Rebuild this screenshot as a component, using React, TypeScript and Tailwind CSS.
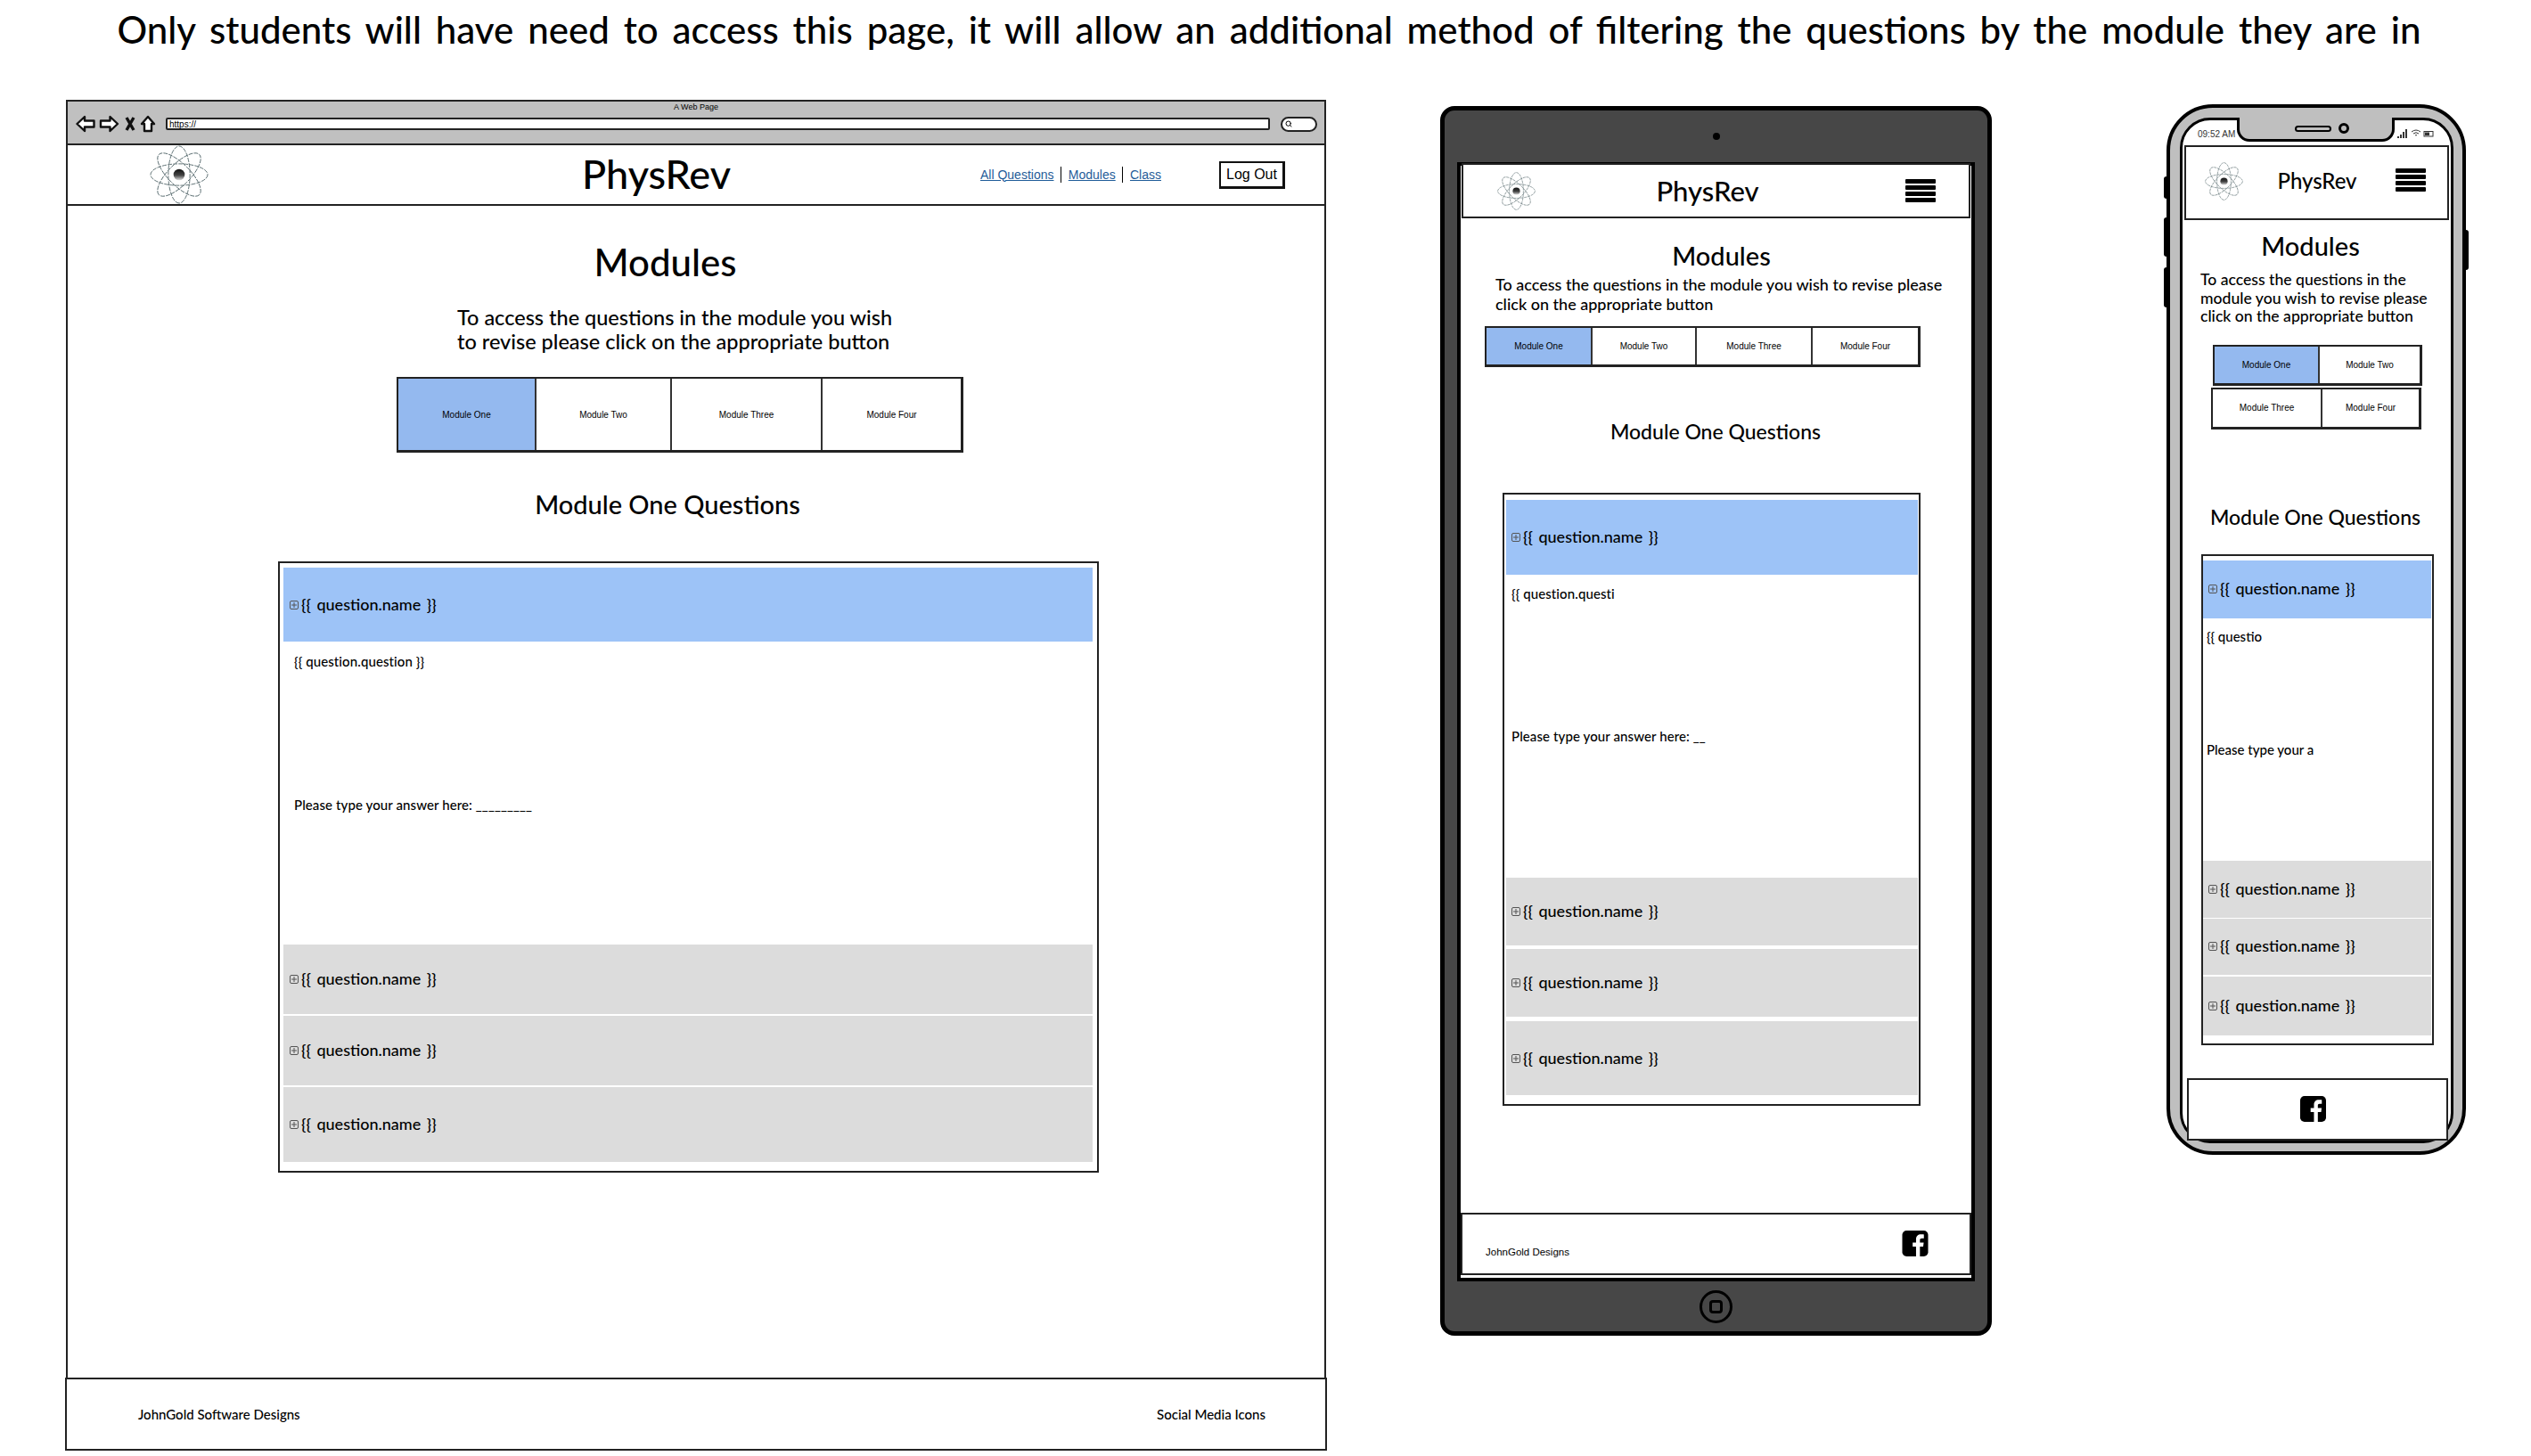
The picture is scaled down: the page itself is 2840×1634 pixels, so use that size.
import React from 'react';
import { Search } from 'lucide-react';
import clsx from 'clsx';

const arial = "font-['Liberation_Sans',sans-serif] font-normal";

function AtomLogo({ className }: { className: string }) {
    return (
        <svg viewBox="0 0 68 68" className={className} fill="none">
            <defs>
                <linearGradient id="core" x1="0" y1="0" x2="0" y2="1">
                    <stop offset="0" stopColor="#111" />
                    <stop offset="0.55" stopColor="#444" />
                    <stop offset="1" stopColor="#ddd" />
                </linearGradient>
            </defs>
            {[0, 45, 90, 135].map((r) => (
                <ellipse
                    key={r}
                    cx="34"
                    cy="34"
                    rx="33"
                    ry="12.5"
                    stroke="#4b5f63"
                    strokeWidth="0.9"
                    strokeDasharray="5 1.2"
                    transform={`rotate(${r} 34 34)`}
                />
            ))}
            <circle cx="34" cy="34" r="6.5" fill="url(#core)" />
        </svg>
    );
}

function FacebookIcon({ className }: { className: string }) {
    return (
        <svg viewBox="0 0 30 30" className={className}>
            <rect width="30" height="30" rx="5" fill="#000" />
            <path
                d="M20.5 30V18.5h3.8l.6-4.5h-4.4v-2.8c0-1.3.4-2.2 2.2-2.2h2.4V4.6c-.4-.1-1.8-.2-3.4-.2-3.4 0-5.7 2-5.7 5.8V14h-3.9v4.5h3.9V30z"
                fill="#fff"
            />
        </svg>
    );
}

function Hamburger() {
    return (
        <div className="flex h-[27px] w-[34px] flex-col justify-between">
            <span className="h-[5px] rounded-[1px] bg-black" />
            <span className="h-[5px] rounded-[1px] bg-black" />
            <span className="h-[5px] rounded-[1px] bg-black" />
            <span className="h-[5px] rounded-[1px] bg-black" />
        </div>
    );
}

function QuestionRow({ className }: { className: string }) {
    return (
        <div className={clsx('flex items-center text-[18px] leading-none whitespace-nowrap [word-spacing:2px]', className)}>
            <svg viewBox="0 0 10 10" className="mr-[3px] h-[10px] w-[10px] shrink-0" fill="none" stroke="#555" strokeWidth="1">
                <rect x="0.5" y="0.5" width="9" height="9" rx="1.5" />
                <path d="M2 5h6M5 2v6" />
            </svg>
            <span className="-mt-[2px]">{'{{ question.name }}'}</span>
        </div>
    );
}

function Tabs({ labels, className }: { labels: string[]; className: string }) {
    return (
        <div className={clsx('grid border-2 border-r-[3px] border-b-[3px] border-[#222]', arial, className)}>
            {labels.map((label, i) => (
                <div
                    key={label}
                    className={clsx(
                        'flex items-center justify-center text-[10px]',
                        i < labels.length - 1 && 'border-r-2 border-[#333]',
                        label === 'Module One' ? 'bg-[#94b9ef]' : 'bg-white',
                    )}
                >
                    {label}
                </div>
            ))}
        </div>
    );
}

function DesktopMock() {
    return (
        <div className="mt-[44px] ml-[73px] flex h-[1516px] w-[1416px] flex-col">
            {/* Browser bar */}
            <div className="mx-px h-[51px] border-2 border-[#222] bg-[#c0c0c0]">
                <div className={clsx('flex h-[13px] items-center justify-center text-[9px]', arial)}>A Web Page</div>
                <div className="flex h-[24px] items-center pl-[9px]">
                    <svg viewBox="0 0 90 20" className="h-[20px] w-[90px]" fill="#fff" stroke="#111" strokeWidth="2.4" strokeLinejoin="round">
                        <path d="M1.5 10 10 2v4.5h10.5v7H10V18z" />
                        <path d="M47 10 38.500 2v4.5H28v7h10.500V18z" />
                        <path d="M57 3l8 14M65 3l-8 14" fill="none" strokeWidth="3.4" />
                        <path d="M74 10l7-8 7 8h-3v8h-8v-8z" />
                    </svg>
                    <div className={clsx('ml-[11px] flex h-[14px] w-[1239px] items-center rounded-[2px] border-2 border-[#222] bg-white pl-[2px] text-[10px]', arial)}>
                        https://
                    </div>
                    <div className="ml-[12px] flex h-[17px] w-[41px] items-center rounded-full border-2 border-[#222] bg-white pl-[3px]">
                        <Search size={8} strokeWidth={3} />
                    </div>
                </div>
            </div>

            {/* Page */}
            <div className="mx-px flex-1 border-x-2 border-[#222]">
                <nav className="flex h-[68px] items-center border-b-2 border-[#222]">
                    <AtomLogo className="ml-[90px] h-[66px] w-[70px] shrink-0" />
                    <div className="ml-[419px] flex w-[163px] justify-center text-[45px] whitespace-nowrap">PhysRev</div>
                    <div className={clsx('ml-[282px] flex w-[203px] items-center justify-between text-[14px]', arial)}>
                        <a className="text-[#1f5c99] underline">All Questions</a>
                        <span className="h-[18px] border-l border-black" />
                        <a className="text-[#1f5c99] underline">Modules</a>
                        <span className="h-[18px] border-l border-black" />
                        <a className="text-[#1f5c99] underline">Class</a>
                    </div>
                    <div className={clsx('ml-[65px] flex h-[31px] w-[74px] items-center justify-center border-2 border-r-[3px] border-b-[3px] border-[#111] text-[16px]', arial)}>
                        Log Out
                    </div>
                </nav>
                <h1 className="mt-[38px] ml-[590px] flex h-[50px] w-[161px] items-center justify-center text-[42px] whitespace-nowrap">Modules</h1>
                <p className="mt-[24px] ml-[437px] w-[500px] text-[23.500px] leading-[27px]">
                    To access the questions in the module you wish
                    <br />
                    to revise please click on the appropriate button
                </p>
                <Tabs
                    labels={['Module One', 'Module Two', 'Module Three', 'Module Four']}
                    className="mt-[26px] ml-[369px] h-[85px] w-[636px] grid-cols-[155px_152px_169px_1fr]"
                />
                <h2 className="mt-[38px] ml-[525px] flex h-[40px] w-[296px] items-center justify-center text-[29px] whitespace-nowrap">
                    Module One Questions
                </h2>
                <div className="mt-[44px] ml-[236px] h-[686px] w-[921px] border-2 border-[#222] pt-[5px] pr-[5px] pl-[4px]">
                    <QuestionRow className="h-[83px] bg-[#9dc3f7] pl-[7px]" />
                    <div className="h-[340px] pt-[13px] pl-[12px] text-[15px] leading-[18px] tracking-[0.1px]">
                        <p>{'{{ question.question }}'}</p>
                        <p className="mt-[143px]">Please type your answer here: _________</p>
                    </div>
                    <QuestionRow className="h-[78px] bg-[#dcdcdc] pl-[7px]" />
                    <QuestionRow className="mt-[2px] h-[78px] bg-[#dcdcdc] pl-[7px]" />
                    <QuestionRow className="mt-[2px] h-[84px] bg-[#dcdcdc] pl-[7px]" />
                </div>
            </div>

            <footer className="flex h-[82px] items-center justify-between border-2 border-[#222] pr-[67px] pl-[80px] text-[15px]">
                <span>JohnGold Software Designs</span>
                <span>Social Media Icons</span>
            </footer>
        </div>
    );
}

function TabletMock() {
    return (
        <div className="mt-[51px] ml-[127px] h-[1380px] w-[619px] rounded-[16px] border-[5px] border-black bg-[#474747] px-[14px]">
            <div className="flex h-[58px] items-center justify-center">
                <span className="h-[8px] w-[8px] rounded-full bg-black" />
            </div>

            <div className="h-[1256px] border-4 border-black bg-white">
                <nav className="mx-px -mt-[3px] flex h-[62px] items-center border-2 border-[#222] bg-white">
                    <AtomLogo className="ml-[38px] h-[43px] w-[43px] shrink-0" />
                    <div className="ml-[138px] flex w-[110px] justify-center text-[31px] whitespace-nowrap">PhysRev</div>
                    <div className="mr-[37px] ml-auto">
                        <Hamburger />
                    </div>
                </nav>
                <h1 className="mt-[22px] ml-[240px] flex h-[40px] w-[105px] items-center justify-center text-[29px] whitespace-nowrap">Modules</h1>
                <p className="mt-[1px] ml-[39px] text-[18px] leading-[22px] whitespace-nowrap">
                    To access the questions in the module you wish to revise please
                    <br />
                    click on the appropriate button
                </p>
                <Tabs
                    labels={['Module One', 'Module Two', 'Module Three', 'Module Four']}
                    className="mt-[14px] ml-[27px] h-[46px] w-[489px] grid-cols-[119px_117px_130px_1fr]"
                />
                <h2 className="mt-[56px] ml-[168px] flex h-[32px] w-[236px] items-center justify-center text-[23px] whitespace-nowrap">
                    Module One Questions
                </h2>
                <div className="mt-[53px] ml-[47px] h-[688px] w-[469px] border-2 border-[#222] pt-[6px] pr-px pl-[2px]">
                    <QuestionRow className="h-[84px] bg-[#9dc3f7] pl-[6px]" />
                    <div className="h-[340px] overflow-hidden pt-[12px] pl-[6px] text-[15px] leading-[18px] tracking-[0.1px]">
                        <p>{'{{ question.questi'}</p>
                        <p className="mt-[142px]">Please type your answer here: __</p>
                    </div>
                    <QuestionRow className="h-[76px] bg-[#dcdcdc] pl-[6px]" />
                    <QuestionRow className="mt-[4px] h-[76px] bg-[#dcdcdc] pl-[6px]" />
                    <QuestionRow className="mt-[5px] h-[83px] bg-[#dcdcdc] pl-[6px]" />
                </div>
                <footer className="mt-[120px] flex h-[70px] items-center border-2 border-[#222] pr-[46px] pl-[26px]">
                    <span className={clsx('mt-[20px] text-[11.500px]', arial)}>JohnGold Designs</span>
                    <FacebookIcon className="-mt-[2px] ml-auto h-[29px] w-[30px]" />
                </footer>
            </div>

            <div className="flex h-[56px] items-center justify-center">
                <div className="flex h-[37px] w-[37px] items-center justify-center rounded-full border-[3px] border-black">
                    <span className="h-[15px] w-[15px] rounded-[4px] border-[3px] border-black" />
                </div>
            </div>
        </div>
    );
}

function PhoneMock() {
    return (
        <div className="relative mt-[49px] ml-[196px] h-[1179px] w-[336px] rounded-[52px] border-[4px] border-black bg-[#bfbfbf] pt-[11px] pl-[11px]">
            {/* side buttons */}
            <span className="absolute top-[77px] -left-[7px] h-[25px] w-[3px] rounded-l bg-black" />
            <span className="absolute top-[123px] -left-[7px] h-[44px] w-[3px] rounded-l bg-black" />
            <span className="absolute top-[179px] -left-[7px] h-[45px] w-[3px] rounded-l bg-black" />
            <span className="absolute top-[137px] -right-[7px] h-[45px] w-[3px] rounded-r bg-black" />

            <div className="relative h-[1151px] w-[307px] rounded-[34px] border-[3px] border-black bg-white">
                {/* notch */}
                <div className="absolute -top-[3px] left-[61px] flex h-[27px] w-[177px] items-center justify-center gap-[8px] rounded-b-[14px] border-x-[3px] border-b-[3px] border-black bg-[#bfbfbf]">
                    <span className="ml-[14px] h-[7px] w-[41px] rounded-full border-2 border-black bg-[#bfbfbf]" />
                    <span className="h-[12px] w-[12px] rounded-full border-[3px] border-black" />
                </div>

                {/* status bar */}
                <div className={clsx('flex h-[28px] items-center pr-[18px] pl-[17px] text-[10px]', arial)}>
                    <span className="mt-[2px] text-[#333]">09:52 AM</span>
                    <svg viewBox="0 0 42 10" className="mt-[1px] ml-auto h-[10px] w-[42px]" fill="#333">
                        <rect x="0" y="8" width="2" height="2" />
                        <rect x="3" y="6" width="2" height="4" />
                        <rect x="6" y="3" width="2" height="7" />
                        <rect x="9" y="0" width="2" height="10" />
                        <path d="M16 3q5-4 10 0M18 5q3-2.500 6 0M20 7q1-1 2 0" fill="none" stroke="#333" strokeWidth="1" />
                        <rect x="30" y="2.500" width="10" height="5.500" fill="none" stroke="#333" strokeWidth="1" />
                        <rect x="31" y="3.500" width="5" height="3.500" />
                    </svg>
                </div>

                <nav className="mx-[2px] flex h-[84px] items-center border-y-2 border-x-2 border-[#222]">
                    <AtomLogo className="mt-[-4px] ml-[21px] h-[43px] w-[43px] shrink-0" />
                    <div className="mt-[-4px] ml-[39px] flex w-[88px] justify-center text-[24px] whitespace-nowrap">PhysRev</div>
                    <div className="mt-[-6px] ml-[44px]">
                        <Hamburger />
                    </div>
                </nav>

                <h1 className="mt-[9px] ml-[91px] flex h-[40px] w-[105px] items-center justify-center text-[29px] whitespace-nowrap">Modules</h1>
                <p className="mt-[8px] ml-[20px] text-[17.600px] leading-[20.500px] whitespace-nowrap">
                    To access the questions in the
                    <br />
                    module you wish to revise please
                    <br />
                    click on the appropriate button
                </p>
                <Tabs labels={['Module One', 'Module Two']} className="mt-[21px] ml-[34px] h-[46px] w-[235px] grid-cols-[118px_1fr]" />
                <Tabs labels={['Module Three', 'Module Four']} className="mt-[2px] ml-[32px] h-[47px] w-[236px] grid-cols-[123px_1fr]" />
                <h2 className="mt-[83px] ml-[30px] flex h-[32px] w-[238px] items-center justify-center text-[23px] whitespace-nowrap">
                    Module One Questions
                </h2>
                <div className="mt-[25px] ml-[21px] h-[551px] w-[261px] border-2 border-[#222] pt-[5px] pr-[1px]">
                    <QuestionRow className="h-[65px] bg-[#9dc3f7] pl-[6px]" />
                    <div className="h-[272px] overflow-hidden pt-[11px] pl-[4px] text-[15px] leading-[18px]">
                        <p>{'{{ questio'}</p>
                        <p className="mt-[109px]">Please type your a</p>
                    </div>
                    <QuestionRow className="h-[64px] bg-[#dcdcdc] pl-[6px]" />
                    <QuestionRow className="mt-px h-[63px] bg-[#dcdcdc] pl-[6px]" />
                    <QuestionRow className="mt-[2px] h-[66px] bg-[#dcdcdc] pl-[6px]" />
                </div>
                <footer className="relative mt-[37px] ml-[5px] flex h-[70px] w-[293px] items-center justify-center border-2 border-[#222] bg-white">
                    <FacebookIcon className="-ml-[10px] h-[29px] w-[29px]" />
                </footer>
            </div>
        </div>
    );
}

export default function App() {
    return (
        <div className="h-[1634px] w-[2840px] overflow-hidden bg-white font-[Lato,sans-serif] font-medium text-black">
            <div className="flex h-[66px] items-center justify-center pl-[8px] text-[42px] [word-spacing:5.300px] whitespace-nowrap">
                Only students will have need to access this page, it will allow an additional method of filtering the questions by the module they are in
            </div>
            <div className="flex items-start pt-[2px]">
                <DesktopMock />
                <TabletMock />
                <PhoneMock />
            </div>
        </div>
    );
}
